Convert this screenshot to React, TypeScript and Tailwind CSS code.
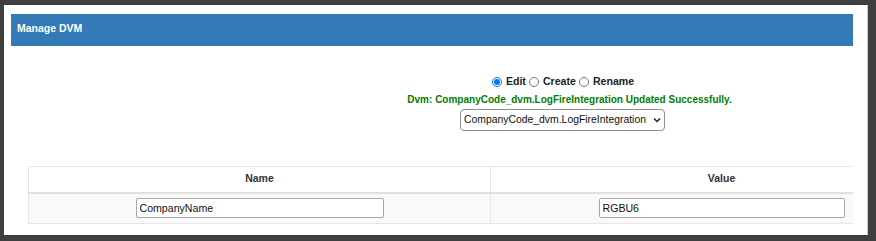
import React, { useState } from 'react';

type Mode = 'edit' | 'create' | 'rename';

const DVM_NAME = 'CompanyCode_dvm.LogFireIntegration';

const rows = [{ name: 'CompanyName', value: 'RGBU6' }];

const ModeRadio: React.FC<{
  id: Mode;
  label: string;
  checked: boolean;
  onChange: (m: Mode) => void;
}> = ({ id, label, checked, onChange }) => (
  <label className="flex items-center gap-[4px] mr-[3px] cursor-pointer">
    <input
      type="radio"
      name="mode"
      checked={checked}
      onChange={() => onChange(id)}
      className="m-0 w-[10px] h-[10px] accent-[#0075ff]"
    />
    <span>{label}</span>
  </label>
);

export default function App() {
  const [mode, setMode] = useState<Mode>('edit');

  return (
    <div
      className="w-[876px] h-[241px] bg-[#404040] pt-[5px] pl-[4px] pr-[8px] pb-[6px]"
      style={{ fontFamily: '"Liberation Sans", Arial, sans-serif' }}
    >
      <div className="h-[230px] bg-white pt-[9px] pl-[7px] pr-[14px] border-r border-[#d0d0d0]">
        <div className="h-full overflow-hidden">
          {/* Panel heading */}
          <div className="h-[32px] bg-[#337ab7] pl-[6px] pt-[8px] text-[10.5px] leading-[13px] font-bold text-white">
            Manage DVM
          </div>

          {/* Form */}
          <div className="pl-[261px] flex flex-col items-center">
            <div className="mt-[28px] ml-[4px] h-[16px] flex items-center text-[10.6px] font-bold text-[#222]">
              <ModeRadio id="edit" label="Edit" checked={mode === 'edit'} onChange={setMode} />
              <ModeRadio id="create" label="Create" checked={mode === 'create'} onChange={setMode} />
              <ModeRadio id="rename" label="Rename" checked={mode === 'rename'} onChange={setMode} />
            </div>
            <div className="mt-[3px] ml-[14px] leading-[14px] text-[10px] font-bold text-[#008000] whitespace-nowrap">
              Dvm: {DVM_NAME} Updated Successfully.
            </div>
            <div className="relative mt-[2px]">
              <select
                defaultValue={DVM_NAME}
                className="block appearance-none h-[22px] w-[205px] border border-[#8f8f8f] rounded-[4px] bg-white pl-[3px] pr-[14px] text-[10.4px] text-[#111]"
              >
                <option>{DVM_NAME}</option>
              </select>
              <svg
                className="absolute right-[4px] top-[8px] w-[8px] h-[6px] pointer-events-none"
                viewBox="0 0 8 6"
                fill="none"
                stroke="#222"
                strokeWidth={1.5}
              >
                <path d="M1 1.5l3 3 3-3" />
              </svg>
            </div>
          </div>

          {/* Values table */}
          <table className="mt-[35px] ml-[17px] w-[924px] table-fixed border-collapse border border-[#e6e6e6] text-[10.5px]">
            <thead>
              <tr className="h-[26px]">
                <th className="w-[462px] border border-[#e6e6e6] border-b-2 border-b-[#e0e0e0] font-bold text-[#333]">
                  Name
                </th>
                <th className="w-[462px] border border-[#e6e6e6] border-b-2 border-b-[#e0e0e0] font-bold text-[#333]">
                  Value
                </th>
              </tr>
            </thead>
            <tbody>
              {rows.map((r) => (
                <tr key={r.name} className="h-[31px] bg-[#f9f9f9]">
                  <td className="border border-[#e6e6e6] text-center">
                    <input
                      defaultValue={r.name}
                      className="w-[248px] h-[20px] border border-[#a6a6a6] rounded-[2px] bg-white px-[3px] text-[10.6px] text-[#111] align-middle"
                    />
                  </td>
                  <td className="border border-[#e6e6e6] text-center">
                    <input
                      defaultValue={r.value}
                      className="w-[246px] h-[20px] border border-[#a6a6a6] rounded-[2px] bg-white px-[3px] text-[10.6px] text-[#111] align-middle"
                    />
                  </td>
                </tr>
              ))}
            </tbody>
          </table>
        </div>
      </div>
    </div>
  );
}
